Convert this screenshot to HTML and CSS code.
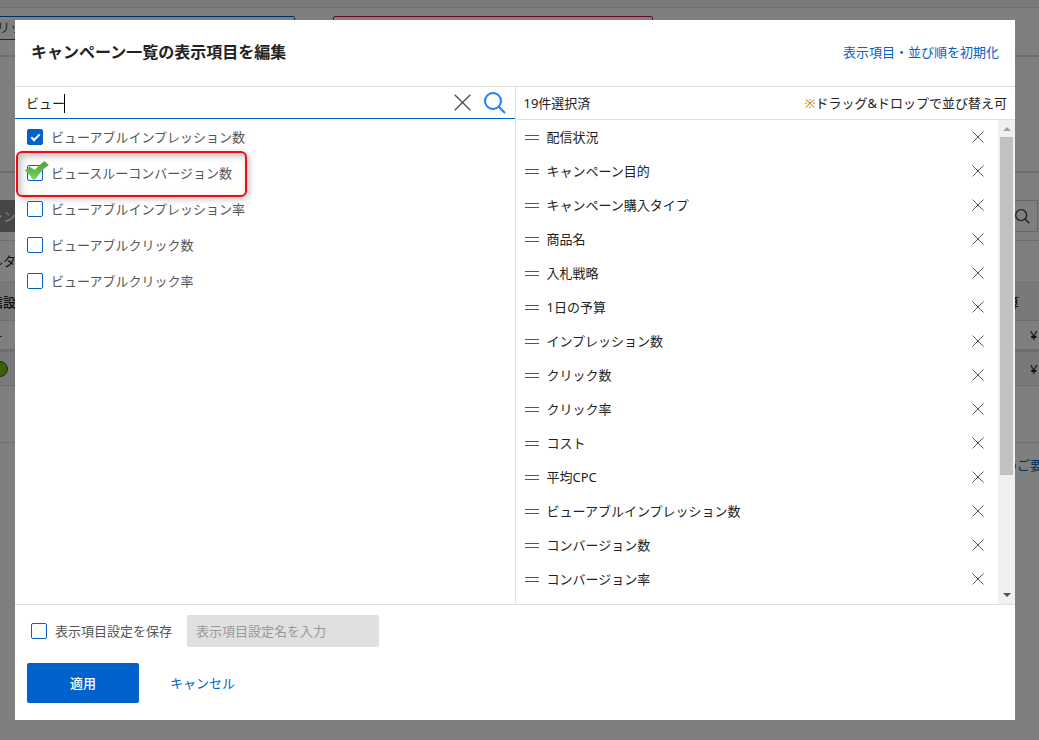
FILE: index.html
```html
<!DOCTYPE html>
<html lang="ja">
<head>
<meta charset="utf-8">
<meta name="viewport" content="width=device-width, initial-scale=1">
<title>キャンペーン一覧の表示項目を編集</title>
<link rel="stylesheet" href="styles.css">
</head>
<body>
<svg class="sprite" aria-hidden="true">
  <symbol id="close" viewBox="0 0 12 12"><path d="M.5.5l11 11M11.5.5l-11 11" fill="none" stroke="currentColor"/></symbol>
  <symbol id="search" viewBox="0 0 22 22"><g fill="none" stroke="currentColor"><circle cx="9" cy="9" r="8"/><path d="M14.700 14.700L21 21"/></g></symbol>
  <symbol id="grip" viewBox="0 0 14 5"><path d="M0 .5h14M0 4.500h14" stroke="currentColor"/></symbol>
</svg>

<div class="page" aria-hidden="true">
  <div class="page-top"></div>
  <div class="page-filters">
    <span class="filter">リック</span>
    <span class="filter filter-error"></span>
  </div>
  <div class="page-summary"></div>
  <div class="page-tabs">
    <span class="tab">ャン</span>
    <span class="page-search"><svg><use href="#search"/></svg></span>
  </div>
  <div class="page-tools">ルタ</div>
  <div class="page-row page-head"><span>信設</span><span class="budget-head">算</span></div>
  <div class="page-row page-first"><span class="dash">-</span><span class="amount">¥1</span></div>
  <div class="page-row page-second"><span class="status"></span><span class="amount">¥1</span></div>
  <div class="page-space"></div>
  <div class="page-foot"><span>のご要</span></div>
</div>

<div class="overlay">
  <section class="modal" role="dialog" aria-labelledby="title">
    <header class="modal-head">
      <h1 id="title">キャンペーン一覧の表示項目を編集</h1>
      <a href="#">表示項目・並び順を初期化</a>
    </header>

    <div class="columns">
      <div class="pane">
        <div class="search">
          <input type="text" value="ビュー" aria-label="項目を検索">
          <span class="caret"></span>
          <button type="button" class="icon-button clear" aria-label="クリア"><svg><use href="#close"/></svg></button>
          <button type="button" class="icon-button find" aria-label="検索"><svg><use href="#search"/></svg></button>
        </div>
        <ul class="options">
          <li><label><input type="checkbox" checked>ビューアブルインプレッション数</label></li>
          <li class="marked"><label><input type="checkbox">ビュースルーコンバージョン数</label>
            <svg class="tick" viewBox="0 0 24 19" aria-hidden="true">
              <defs><linearGradient id="green" x1="0" y1="0" x2="0" y2="1"><stop offset="0" stop-color="#4a9e3a"/><stop offset=".6" stop-color="#66c04a"/><stop offset="1" stop-color="#7ddb5c"/></linearGradient></defs>
              <path d="M0 9.500L4.500 5.500l5.300 3.500Q13.500 4 19.500.2L23.800 4Q16 9.500 10.800 18L8 19Q4.500 13 0 9.500Z" fill="url(#green)"/>
            </svg>
          </li>
          <li><label><input type="checkbox">ビューアブルインプレッション率</label></li>
          <li><label><input type="checkbox">ビューアブルクリック数</label></li>
          <li><label><input type="checkbox">ビューアブルクリック率</label></li>
        </ul>
      </div>

      <div class="pane pane-selected">
        <div class="selected-head"><span>19件選択済</span><span><span class="note">※</span>ドラッグ&amp;ドロップで並び替え可</span></div>
        <div class="selected-body">
          <ul class="selected">
            <li><svg class="grip"><use href="#grip"/></svg><span>配信状況</span><button type="button" class="icon-button" aria-label="配信状況を削除"><svg><use href="#close"/></svg></button></li>
            <li><svg class="grip"><use href="#grip"/></svg><span>キャンペーン目的</span><button type="button" class="icon-button" aria-label="キャンペーン目的を削除"><svg><use href="#close"/></svg></button></li>
            <li><svg class="grip"><use href="#grip"/></svg><span>キャンペーン購入タイプ</span><button type="button" class="icon-button" aria-label="キャンペーン購入タイプを削除"><svg><use href="#close"/></svg></button></li>
            <li><svg class="grip"><use href="#grip"/></svg><span>商品名</span><button type="button" class="icon-button" aria-label="商品名を削除"><svg><use href="#close"/></svg></button></li>
            <li><svg class="grip"><use href="#grip"/></svg><span>入札戦略</span><button type="button" class="icon-button" aria-label="入札戦略を削除"><svg><use href="#close"/></svg></button></li>
            <li><svg class="grip"><use href="#grip"/></svg><span>1日の予算</span><button type="button" class="icon-button" aria-label="1日の予算を削除"><svg><use href="#close"/></svg></button></li>
            <li><svg class="grip"><use href="#grip"/></svg><span>インプレッション数</span><button type="button" class="icon-button" aria-label="インプレッション数を削除"><svg><use href="#close"/></svg></button></li>
            <li><svg class="grip"><use href="#grip"/></svg><span>クリック数</span><button type="button" class="icon-button" aria-label="クリック数を削除"><svg><use href="#close"/></svg></button></li>
            <li><svg class="grip"><use href="#grip"/></svg><span>クリック率</span><button type="button" class="icon-button" aria-label="クリック率を削除"><svg><use href="#close"/></svg></button></li>
            <li><svg class="grip"><use href="#grip"/></svg><span>コスト</span><button type="button" class="icon-button" aria-label="コストを削除"><svg><use href="#close"/></svg></button></li>
            <li><svg class="grip"><use href="#grip"/></svg><span>平均CPC</span><button type="button" class="icon-button" aria-label="平均CPCを削除"><svg><use href="#close"/></svg></button></li>
            <li><svg class="grip"><use href="#grip"/></svg><span>ビューアブルインプレッション数</span><button type="button" class="icon-button" aria-label="ビューアブルインプレッション数を削除"><svg><use href="#close"/></svg></button></li>
            <li><svg class="grip"><use href="#grip"/></svg><span>コンバージョン数</span><button type="button" class="icon-button" aria-label="コンバージョン数を削除"><svg><use href="#close"/></svg></button></li>
            <li><svg class="grip"><use href="#grip"/></svg><span>コンバージョン率</span><button type="button" class="icon-button" aria-label="コンバージョン率を削除"><svg><use href="#close"/></svg></button></li>
          </ul>
          <div class="scrollbar" aria-hidden="true">
            <svg class="arrow arrow-up" viewBox="0 0 8 4"><path d="M0 4L4 0l4 4z"/></svg>
            <div class="track"><div class="thumb"></div></div>
            <svg class="arrow" viewBox="0 0 8 4"><path d="M0 0h8L4 4z"/></svg>
          </div>
        </div>
      </div>
    </div>

    <footer class="modal-foot">
      <div class="save">
        <label><input type="checkbox">表示項目設定を保存</label>
        <input class="save-name" type="text" placeholder="表示項目設定名を入力" aria-label="表示項目設定名" disabled>
      </div>
      <div class="actions">
        <button type="button" class="apply">適用</button>
        <button type="button" class="cancel">キャンセル</button>
      </div>
    </footer>
  </section>
</div>
</body>
</html>
```

FILE: styles.css
```css
*, *::before, *::after { box-sizing: border-box; }

body {
  margin: 0;
  background: #fff;
  color: #222;
  font: 13px/20px "Noto Sans", "Noto Sans CJK JP", sans-serif;
}

h1, ul { margin: 0; padding: 0; }
ul { list-style: none; }
svg { display: block; flex: none; }
a { color: #0062cc; text-decoration: none; }
input, button { font: inherit; margin: 0; }
button { border: 0; padding: 0; background: none; cursor: pointer; }
.sprite { position: absolute; width: 0; height: 0; }

/* Page under the dialog */
.page { height: 100vh; overflow: hidden; }
.page-top { height: 8px; background: #f5f5f5; border-bottom: 1px solid #dcdcdc; }
.page-filters {
  display: flex;
  gap: 38px;
  height: 49px;
  padding-top: 8px;
  border-bottom: 2px solid #dcdcdc;
}
.filter {
  width: 295px;
  height: 24px;
  border: 1px solid #0062cc;
  border-left: 0;
  border-radius: 0 2px 2px 0;
  color: #555;
  text-indent: -3px;
}
.filter-error { width: 320px; border: 1px solid #d8143c; border-radius: 2px; }
.page-summary { height: 116px; border-bottom: 2px solid #dcdcdc; }
.page-tabs {
  display: flex;
  align-items: flex-end;
  justify-content: space-between;
  height: 68px;
  padding-bottom: 8px;
  border-bottom: 1px solid #dcdcdc;
}
.tab { height: 32px; width: 80px; background: #8c8c8c; color: #fff; line-height: 32px; text-indent: -10px; }
.page-search {
  width: 240px;
  height: 32px;
  margin-right: 1px;
  padding: 8px 7px;
  border: 1px solid #ccc;
  color: #444;
}
.page-search svg { width: 15px; height: 15px; margin-left: auto; stroke-width: 2; }
.page-tools { height: 42px; line-height: 40px; border-bottom: 1px solid #dcdcdc; text-indent: -10px; }
.page-row {
  display: flex;
  align-items: center;
  justify-content: space-between;
  border-bottom: 1px solid #dcdcdc;
  white-space: nowrap;
}
.page-head { height: 38px; background: #f2f2f2; font-weight: 500; text-indent: -10px; }
.budget-head { padding-right: 20px; text-indent: 0; }
.page-first { height: 29px; }
.dash { color: #0062cc; text-indent: -2px; }
.amount { width: 9px; overflow: hidden; }
.page-second { height: 36px; border-top: 2px solid #dcdcdc; background: #f2f2f2; }
.status { width: 16px; height: 16px; margin-left: -8px; border: 1px solid #444; border-radius: 50%; background: #6fc400; }
.page-space { height: 57px; border-bottom: 1px solid #dcdcdc; }
.page-foot { display: flex; justify-content: flex-end; padding-top: 12px; color: #0062cc; }
.page-foot span { margin-right: -4px; }

/* Dialog */
.overlay {
  position: fixed;
  inset: 0;
  display: flex;
  padding: 20px 24px 20px 15px;
  background: rgba(0, 0, 0, .5);
}
.modal { display: flex; flex-direction: column; flex: 1; min-width: 0; background: #fff; }
.modal-head {
  display: flex;
  align-items: center;
  justify-content: space-between;
  padding: 20px 16px 22px;
  border-bottom: 1px solid #e0e0e0;
}
.modal-head h1 { font-size: 16px; line-height: 24px; font-weight: 700; }

.columns { display: flex; flex: 1; min-height: 0; }
.pane { flex: 1; min-width: 0; display: flex; flex-direction: column; }
.pane-selected { border-left: 1px solid #e0e0e0; }

.search {
  position: relative;
  display: flex;
  align-items: center;
  height: 32px;
  padding: 0 9px 0 11px;
  border-bottom: 1px solid #0062cc;
}
.search input {
  flex: 1;
  min-width: 0;
  padding: 0;
  border: 0;
  outline: 0;
  background: none;
  color: #222;
}
.caret { position: absolute; top: 7px; left: 49px; width: 1px; height: 19px; background: #000; }
.icon-button { color: #555; }
.icon-button svg { width: 12px; height: 12px; }
.clear { margin-right: 13px; }
.clear svg { width: 17px; height: 17px; }
.find { color: #1a7cff; }
.find svg { width: 22px; height: 22px; stroke-width: 2; }

label { display: inline-flex; align-items: center; gap: 8px; color: #555; white-space: nowrap; }
input[type="checkbox"] {
  appearance: none;
  flex: none;
  width: 16px;
  height: 16px;
  border: 1px solid #0062cc;
  border-radius: 2px;
  background: #fff;
}
input[type="checkbox"]:checked { background: #0062cc; }
input[type="checkbox"]:checked::after {
  content: "";
  display: block;
  width: 9px;
  height: 5px;
  margin: 4px 0 0 3px;
  border: solid #fff;
  border-width: 0 0 2px 2px;
  transform: rotate(-45deg);
}

.options li { position: relative; display: flex; align-items: center; height: 36px; padding-left: 12px; }
.marked::after {
  content: "";
  position: absolute;
  top: -4px;
  left: 1px;
  width: 231px;
  height: 46px;
  border: 2px solid #f00b12;
  border-radius: 6px;
  box-shadow: 2px 2px 6px rgba(0, 0, 0, .25), inset 3px 3px 7px rgba(0, 0, 0, .25);
}
.tick { position: absolute; top: 6px; left: 10px; width: 24px; height: 19px; }

.selected-head {
  display: flex;
  align-items: center;
  justify-content: space-between;
  height: 33px;
  padding: 0 8px;
  border-bottom: 1px solid #e0e0e0;
  white-space: nowrap;
}
.note { color: #c87a28; }
.selected-body { display: flex; flex: 1; min-height: 0; }
.selected { flex: 1; min-width: 0; overflow: hidden; }
.selected li { display: flex; align-items: center; height: 34px; padding: 0 14px 0 9px; }
.selected li span { flex: 1; padding-left: 8px; }
.grip { width: 14px; height: 5px; color: #555; }
.scrollbar {
  display: flex;
  flex-direction: column;
  align-items: center;
  width: 17px;
  padding: 7px 0;
  background: #f0f0f0;
}
.track { flex: 1; width: 13px; padding: 6px 0; }
.thumb { height: 75%; background: #c1c1c1; }
.arrow { width: 8px; height: 4px; fill: #505050; }
.arrow-up { fill: #a3a3a3; }

.modal-foot { padding: 10px 12px 17px; border-top: 1px solid #e0e0e0; }
.save { display: flex; align-items: center; gap: 15px; padding-left: 4px; }
.save-name {
  width: 192px;
  height: 32px;
  padding: 0 9px;
  border: 0;
  border-radius: 2px;
  background: #e0e0e0;
}
.save-name::placeholder { color: #999; opacity: 1; }
.actions { display: flex; align-items: center; gap: 31px; margin-top: 16px; }
.apply { width: 112px; height: 40px; border-radius: 2px; background: #0062cc; color: #fff; font-weight: 500; }
.cancel { color: #0062cc; }
```
